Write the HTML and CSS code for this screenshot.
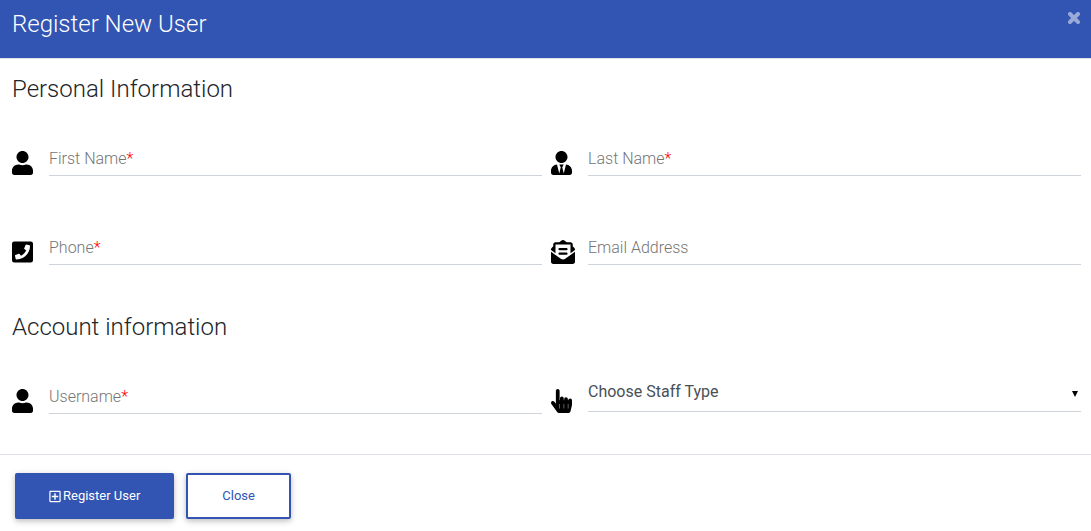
FILE: index.html
```html
<!DOCTYPE html>
<html lang="en">
<head>
<meta charset="utf-8">
<meta name="viewport" content="width=device-width, initial-scale=1">
<title>Register New User</title>
<link rel="stylesheet" href="styles.css">
</head>
<body>
<svg class="sprite" aria-hidden="true">
  <symbol id="user" viewBox="0 0 448 512"><path d="M224 256c70.7 0 128-57.3 128-128S294.700 0 224 0 96 57.300 96 128s57.300 128 128 128zm89.600 32h-16.700c-22.200 10.200-46.900 16-72.900 16s-50.600-5.800-72.900-16h-16.700C60.200 288 0 348.200 0 422.400V464c0 26.500 21.500 48 48 48h352c26.500 0 48-21.500 48-48v-41.600c0-74.200-60.200-134.400-134.400-134.400z"/></symbol>
</svg>
<form class="dialog">
  <header class="dialog-header">
    <h1 class="title">Register New User</h1>
    <button class="dismiss" type="button" aria-label="Dismiss">
      <svg class="dismiss-icon" viewBox="0 0 12 12"><path d="M2 2l8 8M10 2l-8 8"/></svg>
    </button>
  </header>
  <main class="dialog-body">
    <h2 class="title">Personal Information</h2>
    <div class="row">
      <div class="field">
        <svg class="icon"><use href="#user"/></svg>
        <div class="control">
          <input class="input" id="first" type="text" required>
          <label class="label" for="first">First Name<span class="required">*</span></label>
        </div>
      </div>
      <div class="field">
        <svg class="icon" viewBox="0 0 448 512"><path d="M224 256c70.700 0 128-57.300 128-128S294.700 0 224 0 96 57.300 96 128s57.300 128 128 128zm95.800 32.600L272 480l-32-136 32-56h-96l32 56-32 136-47.800-191.400C56.900 292 0 350.300 0 422.400V464c0 26.500 21.500 48 48 48h352c26.500 0 48-21.500 48-48v-41.600c0-72.100-56.900-130.400-128.200-133.800z"/></svg>
        <div class="control">
          <input class="input" id="last" type="text" required>
          <label class="label" for="last">Last Name<span class="required">*</span></label>
        </div>
      </div>
    </div>
    <div class="row">
      <div class="field">
        <svg class="icon" viewBox="0 0 448 512"><path d="M400 32H48A48 48 0 0 0 0 80v352a48 48 0 0 0 48 48h352a48 48 0 0 0 48-48V80a48 48 0 0 0-48-48zM94 416c-7.033 0-13.057-4.873-14.616-11.627l-14.998-65a15 15 0 0 1 8.707-17.160l69.998-29.999a15 15 0 0 1 17.518 4.289l30.997 37.885c48.944-22.963 88.297-62.858 110.781-110.780l-37.886-30.997a15.001 15.001 0 0 1-4.289-17.518l30-69.998a15 15 0 0 1 17.160-8.707l65 14.998A14.997 14.997 0 0 1 384 126c0 160.292-129.945 290-290 290z"/></svg>
        <div class="control">
          <input class="input" id="phone" type="tel" required>
          <label class="label" for="phone">Phone<span class="required">*</span></label>
        </div>
      </div>
      <div class="field">
        <svg class="icon icon-wide" viewBox="0 0 512 512"><path d="M176 216h160c8.840 0 16-7.160 16-16v-16c0-8.840-7.160-16-16-16H176c-8.840 0-16 7.160-16 16v16c0 8.840 7.160 16 16 16zm-16 80c0 8.840 7.160 16 16 16h160c8.840 0 16-7.160 16-16v-16c0-8.840-7.160-16-16-16H176c-8.840 0-16 7.160-16 16v16zm96 121.130c-16.420 0-32.840-5.060-46.860-15.190L0 250.860V464c0 26.510 21.490 48 48 48h416c26.510 0 48-21.490 48-48V250.860L302.860 401.940c-14.020 10.120-30.440 15.190-46.860 15.190zm237.610-254.180c-8.850-6.940-17.240-13.470-29.610-22.810V96c0-26.510-21.490-48-48-48h-77.550c-3.040-2.200-5.870-4.260-9.040-6.560C312.600 29.170 279.200-.35 256 0c-23.200-.35-56.590 29.170-73.410 41.440-3.170 2.300-6 4.360-9.040 6.560H96c-26.510 0-48 21.490-48 48v44.140c-12.370 9.330-20.760 15.870-29.610 22.810A47.995 47.995 0 0 0 0 200.720v10.650l96 69.350V96h320v184.720l96-69.350v-10.650c0-14.740-6.780-28.670-18.390-37.770z"/></svg>
        <div class="control">
          <input class="input" id="email" type="email">
          <label class="label" for="email">Email Address</label>
        </div>
      </div>
    </div>
    <h2 class="title">Account information</h2>
    <div class="row">
      <div class="field">
        <svg class="icon"><use href="#user"/></svg>
        <div class="control">
          <input class="input" id="username" type="text" required>
          <label class="label" for="username">Username<span class="required">*</span></label>
        </div>
      </div>
      <div class="field">
        <svg class="icon" viewBox="0 0 448 512"><path d="M448 240v96c0 3.084-.356 6.159-1.063 9.162l-32 136C410.686 499.230 394.562 512 376 512H168a40.004 40.004 0 0 1-32.350-16.473l-127.997-176c-12.993-17.866-9.043-42.883 8.822-55.876 17.867-12.994 42.884-9.043 55.877 8.823L104 315.992V40c0-22.091 17.908-40 40-40s40 17.909 40 40v200h8v-40c0-22.091 17.908-40 40-40s40 17.909 40 40v40h8v-24c0-22.091 17.908-40 40-40s40 17.909 40 40v24h8c0-22.091 17.908-40 40-40s40 17.909 40 40zm-256 80h-8v96h8v-96zm88 0h-8v96h8v-96zm88 0h-8v96h8v-96z"/></svg>
        <div class="control">
          <select class="input select" id="staff" aria-label="Staff type">
            <option>Choose Staff Type</option>
          </select>
          <svg class="caret" viewBox="0 0 6 6" aria-hidden="true"><path d="M0 0h6L3 6z"/></svg>
        </div>
      </div>
    </div>
  </main>
  <footer class="dialog-footer">
    <button class="button button-primary" type="submit">
      <svg class="button-icon" viewBox="0 0 448 512"><path d="M352 240v32c0 6.600-5.400 12-12 12h-88v88c0 6.600-5.400 12-12 12h-32c-6.600 0-12-5.400-12-12v-88h-88c-6.600 0-12-5.400-12-12v-32c0-6.600 5.400-12 12-12h88v-88c0-6.600 5.400-12 12-12h32c6.600 0 12 5.400 12 12v88h88c6.600 0 12 5.400 12 12zm96-160v352c0 26.500-21.500 48-48 48H48c-26.500 0-48-21.500-48-48V80c0-26.500 21.500-48 48-48h352c26.500 0 48 21.500 48 48zm-48 346V86c0-3.300-2.700-6-6-6H54c-3.300 0-6 2.700-6 6v340c0 3.300 2.700 6 6 6h340c3.300 0 6-2.700 6-6z"/></svg>
      Register User
    </button>
    <button class="button button-outline" type="button">Close</button>
  </footer>
</form>
</body>
</html>
```
FILE: styles.css
```css
*,
*::before,
*::after {
  box-sizing: border-box;
}

body {
  margin: 0;
  background: #fff;
  color: #212529;
  font-family: Roboto, sans-serif;
  font-size: 16px;
  font-weight: 300;
}

.sprite {
  display: none;
}

.dialog-header {
  display: flex;
  justify-content: space-between;
  align-items: flex-start;
  padding: 8px 11px 18px 12px;
  border-bottom: 1px solid #dee2e6;
  background: #3254b2;
  color: #fff;
}

.title {
  margin: 0;
  font-size: 24px;
  font-weight: 300;
  line-height: 32px;
}

.dismiss {
  display: flex;
  padding: 4px 0;
  border: 0;
  background: none;
  color: #fff;
  opacity: 0.5;
  cursor: pointer;
}

.dismiss-icon {
  width: 12px;
  height: 12px;
  fill: none;
  stroke: currentColor;
  stroke-width: 4;
  stroke-linecap: round;
}

.dialog-body {
  padding: 14px 10px 40px 12px;
}

.row {
  display: grid;
  grid-template-columns: 1fr 1fr;
  gap: 9px;
  padding-top: 36px;
}

.row + .row {
  padding-top: 54px;
}

.row + .title {
  padding-top: 46px;
}

.field {
  display: grid;
  grid-template-columns: 24px 1fr;
  gap: 13px;
  align-items: start;
}

.icon {
  width: 21px;
  height: 24px;
  margin-top: 10px;
  fill: #000;
}

.icon-wide {
  width: 24px;
}

.control {
  display: grid;
  align-items: start;
}

.control > * {
  grid-area: 1 / 1;
}

.input {
  width: 100%;
  height: 35px;
  padding: 0;
  border: 0;
  border-bottom: 1px solid #ced4da;
  border-radius: 0;
  outline: 0;
  background: transparent;
  color: #495057;
  font: 400 16px/24px Roboto, sans-serif;
}

.input:focus {
  border-color: #3254b2;
}

.label {
  padding-top: 6px;
  color: #757575;
  line-height: 24px;
  pointer-events: none;
}

.input:focus + .label,
.input:valid:required + .label {
  visibility: hidden;
}

.required {
  color: #f00;
}

.select {
  height: 33px;
  padding-bottom: 6px;
  appearance: none;
}

.caret {
  justify-self: end;
  width: 6px;
  height: 6px;
  margin: 12px 3px 0 0;
  pointer-events: none;
}

.dialog-footer {
  display: flex;
  gap: 12px;
  padding: 18px 15px 12px;
  border-top: 1px solid #dee2e6;
}

.button {
  display: flex;
  justify-content: center;
  align-items: center;
  gap: 2px;
  height: 46px;
  padding: 0 32px;
  border: 2px solid #3254b2;
  border-radius: 2px;
  box-shadow: 0 2px 5px rgba(0, 0, 0, 0.16), 0 2px 8px rgba(0, 0, 0, 0.12);
  font: 400 13px/20px Roboto, sans-serif;
  cursor: pointer;
}

.button-primary {
  background: #3254b2;
  color: #fff;
}

.button-outline {
  padding: 0 34px;
  background: #fff;
  color: #3254b2;
}

.button-icon {
  width: 12px;
  height: 13px;
  fill: currentColor;
}
```
